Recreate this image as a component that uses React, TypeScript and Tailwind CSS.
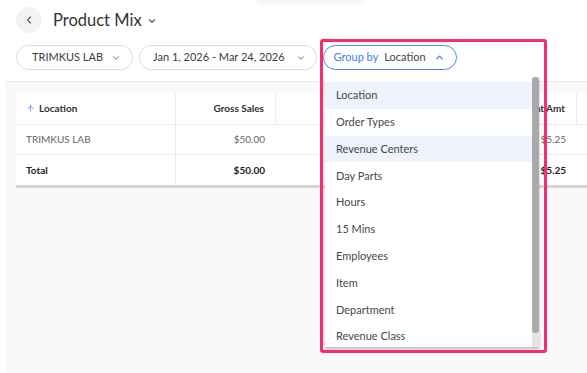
import { ChevronDown, ChevronLeft, ChevronUp, ArrowUp } from "lucide-react";

const groupOptions = [
  "Location",
  "Order Types",
  "Revenue Centers",
  "Day Parts",
  "Hours",
  "15 Mins",
  "Employees",
  "Item",
  "Department",
  "Revenue Class",
];

const columns = [
  { key: "location", label: "Location", width: "w-[160px]" },
  { key: "gross", label: "Gross Sales", width: "w-[100px]" },
  { key: "net", label: "Net Sales", width: "w-[200px]" },
  { key: "discount", label: "Discount Amt", width: "w-[101px]" },
  { key: "tax", label: "", width: "w-[100px]" },
];

const rows = [
  { name: "TRIMKUS LAB", values: ["$50.00", "$44.75", "$5.25", ""], total: false },
  { name: "Total", values: ["$50.00", "$44.75", "$5.25", ""], total: true },
];

export default function App() {
  return (
    <div className="relative flex h-[373px] w-[587px] flex-col overflow-hidden bg-white font-['Lato','Open_Sans',sans-serif]">
      <div className="pointer-events-none absolute left-[255px] top-[-12px] h-[12px] w-[108px] rounded-full shadow-[0_2px_6px_rgba(0,0,0,0.08)]" />

      {/* header */}
      <div className="flex h-[40px] items-center gap-[11px] px-4">
        <div className="flex h-[26px] w-[26px] items-center justify-center rounded-full bg-[#f2f2f2] text-[#555]">
          <ChevronLeft size={12} strokeWidth={2.2} />
        </div>
        <div className="flex items-center gap-[5px] text-[16.5px] text-[#333]">
          Product Mix
          <ChevronDown size={10} strokeWidth={2.6} className="mt-[2px] text-[#555]" />
        </div>
      </div>

      {/* filters */}
      <div className="mt-[5px] flex gap-[6px] px-4">
        <div className="flex h-[25px] items-center gap-[8px] rounded-full border border-[#dcdcdc] bg-white pl-[15px] pr-[11px] text-[11px] text-[#3c3c3c]">
          <span>TRIMKUS LAB</span>
          <ChevronDown size={10} strokeWidth={2.2} className="text-[#666]" />
        </div>
        <div className="flex h-[25px] items-center gap-[11px] rounded-full border border-[#dcdcdc] bg-white pl-[13px] pr-[10px] text-[11px] text-[#3c3c3c]">
          <span>Jan 1, 2026 - Mar 24, 2026</span>
          <ChevronDown size={10} strokeWidth={2.2} className="text-[#666]" />
        </div>
        <div className="flex h-[25px] items-center rounded-full border border-[#4f87f0] bg-white pl-[10px] pr-[11px] text-[11px]">
          <span className="text-[#3f7cea]">Group by</span>
          <span className="ml-[6px] text-[#444]">Location</span>
          <ChevronUp size={11} strokeWidth={2.6} className="ml-[8px] text-[#3f7cea]" />
        </div>
      </div>

      {/* content */}
      <div className="ml-[5px] mt-[11px] flex-1 border-t border-[#e6e6e6] bg-[#f9f9f9] pl-[11px] pt-[11px]">
        <div className="w-[700px] border-b-[3px] border-[#d6d6d6] bg-white">
          <div className="flex h-[32px] border-b border-[#ececec] text-[10px] font-bold text-[#2f2f2f]">
            {columns.map((c, i) => (
              <div
                key={c.key}
                className={
                  i === 0
                    ? `${c.width} flex items-center gap-[4px] border-r border-[#ececec] pl-[10px]`
                    : `${c.width} flex items-center justify-end border-r border-[#ececec] pr-[11px]`
                }
              >
                {i === 0 && <ArrowUp size={9} strokeWidth={2} className="text-[#3f7cea]" />}
                {c.label}
              </div>
            ))}
          </div>
          {rows.map((r) => (
            <div
              key={r.name}
              className={
                r.total
                  ? "flex h-[30px] text-[10px] font-bold text-[#222]"
                  : "flex h-[30px] border-b border-[#ececec] text-[10px] text-[#666]"
              }
            >
              <div className="flex w-[160px] items-center border-r border-[#ececec] pl-[10px]">{r.name}</div>
              {r.values.map((v, i) => (
                <div
                  key={i}
                  className={`flex items-center justify-end pr-[11px] ${
                    i === 0 ? "w-[100px]" : i === 1 ? "w-[200px]" : i === 2 ? "w-[101px]" : "w-[100px]"
                  }`}
                >
                  {v}
                </div>
              ))}
            </div>
          ))}
        </div>
      </div>

      {/* group by dropdown */}
      <div className="absolute left-[325px] top-[77px] flex h-[270px] w-[214px] overflow-hidden bg-white shadow-[0_2px_3px_rgba(0,0,0,0.25)]">
        <div className="flex-1 pt-[5px]">
          {groupOptions.map((opt) => (
            <div
              key={opt}
              className={`flex h-[26.8px] items-center pl-[11px] text-[11px] text-[#474747] ${
                opt === "Location" || opt === "Revenue Centers" ? "bg-[#edf2fc]" : ""
              }`}
            >
              {opt}
            </div>
          ))}
        </div>
        <div className="flex w-[7px] flex-col bg-[#e4e4e4]">
          <div className="h-[256px] rounded-full bg-[#a9a9a9]" />
        </div>
      </div>

      {/* highlight frame */}
      <div className="pointer-events-none absolute left-[320px] top-[39px] h-[314px] w-[227px] rounded-[3px] border-[3px] border-[#f82d6b]" />
    </div>
  );
}
